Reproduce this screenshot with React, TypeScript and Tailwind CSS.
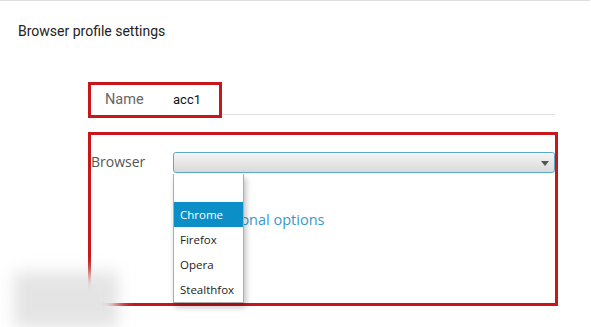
import { useState } from "react";

const OPTIONS = ["", "Chrome", "Firefox", "Opera", "Stealthfox"];

export default function App() {
  const [active] = useState("Chrome");

  return (
    <div className="relative w-[591px] h-[327px] overflow-hidden bg-white font-['Roboto',sans-serif]">
      <div className="h-px w-[590px] bg-[#dedede]" />

      <div className="pl-[18px] pt-[20px] text-[14px] leading-[20px] text-[#222]">
        Browser profile settings
      </div>

      {/* Name row */}
      <div className="ml-[88px] mt-[41px] flex w-[467px] items-end">
        <div className="flex h-[36px] w-[134px] shrink-0 items-center border-[3px] border-[#c8161b] pl-[14px]">
          <span className="w-[68px] text-[14.5px] text-[#666]">Name</span>
          <span className="text-[13px] text-[#111]">acc1</span>
        </div>
        <div className="mb-[3px] h-px flex-1 bg-[#e2e2e2]" />
      </div>

      {/* Browser box */}
      <div className="ml-[88px] mt-[14px] h-[174px] w-[470px] border-[3px] border-[#c8161b] pt-[17px] font-['Open_Sans',sans-serif]">
        <div className="flex items-start">
          <span className="mt-[1px] w-[82px] text-[14px] leading-[18px] text-[#555]">Browser</span>
          <div className="relative h-[21px] w-[382px] rounded-[3px] border border-[#59a9c8] bg-gradient-to-b from-[#f4f4f4] to-[#dadada] shadow-[inset_0_1px_0_#fff]">
            <svg className="absolute right-[5px] top-[8px]" width="8" height="5" viewBox="0 0 8 5">
              <path d="M0 0 H8 L4 5 Z" fill="#555" />
            </svg>
          </div>
        </div>
        <div className="ml-[110px] mt-[38px] text-[14.5px] leading-[18px] text-[#3a98c8]">
          Additional options
        </div>
      </div>

      {/* Open dropdown list */}
      <div className="absolute left-[173px] top-[174px] w-[71px] border border-[#adadad] border-t-0 bg-white pt-[3px] shadow-[2px_4px_6px_rgba(0,0,0,0.25)] font-['Open_Sans',sans-serif] text-[11.5px] text-[#222]">
        {OPTIONS.map((o) => (
          <div
            key={o || "empty"}
            className={`flex h-[25px] items-center px-[6px] ${
              o === active ? "bg-[#0c8ec6] text-white" : ""
            }`}
          >
            {o}
          </div>
        ))}
      </div>

      {/* blurred shape bottom-left */}
      <div className="absolute left-[14px] top-[272px] h-[56px] w-[104px] bg-[#e4e4e4] blur-[8px]" />
    </div>
  );
}
